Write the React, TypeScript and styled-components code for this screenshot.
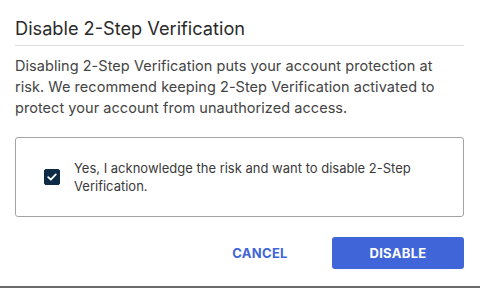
import React, { useState } from "react";
import styled, { createGlobalStyle } from "styled-components";

const Global = createGlobalStyle`
  html, body { margin: 0; padding: 0; background: #fff; }
  body { font-family: Inter, "Noto Sans", sans-serif; }
`;

const Page = styled.div`
  width: 480px;
  height: 288px;
  box-sizing: border-box;
  border-bottom: 2px solid #6b6b6b;
  display: flex;
  flex-direction: column;
  padding: 0 16px 0 15px;
`;

const Title = styled.h2`
  margin: 0;
  padding: 19px 0 8px;
  font-size: 18.2px;
  font-weight: 400;
  line-height: 18px;
  color: #2a2a2a;
  border-bottom: 1px solid #e0e0e0;
`;

const Body = styled.p`
  margin: 0;
  padding-top: 9px;
  font-size: 14.5px;
  line-height: 21px;
  color: #444;
  letter-spacing: 0.05px;
`;

const AckBox = styled.label`
  margin-top: 19px;
  height: 80px;
  box-sizing: border-box;
  border: 1px solid #a3a3a3;
  border-radius: 3px;
  display: flex;
  align-items: center;
  gap: 14px;
  padding: 0 20px 0 28px;
  cursor: pointer;
`;

const Check = styled.span<{ $checked: boolean }>`
  flex: none;
  width: 16px;
  height: 16px;
  border-radius: 2px;
  background: ${(p) => (p.$checked ? "#0d2a47" : "#fff")};
  border: 1px solid #0d2a47;
  box-sizing: border-box;
  display: flex;
  align-items: center;
  justify-content: center;
`;

const AckText = styled.span`
  font-size: 13px;
  line-height: 18px;
  color: #3a3a3a;
`;

const Actions = styled.div`
  margin-top: 20px;
  display: flex;
  justify-content: flex-end;
  align-items: center;
  gap: 24px;
`;

const Button = styled.button<{ $primary?: boolean }>`
  font-family: Inter, "Noto Sans", sans-serif;
  font-size: 13px;
  font-weight: 700;
  letter-spacing: 0.3px;
  height: 32px;
  border: none;
  border-radius: 3px;
  cursor: pointer;
  width: ${(p) => (p.$primary ? "132px" : "96px")};
  background: ${(p) => (p.$primary ? "#4065d8" : "transparent")};
  color: ${(p) => (p.$primary ? "#fff" : "#4065d8")};
`;

export default function App() {
  const [checked, setChecked] = useState(true);
  return (
    <>
      <Global />
      <Page>
        <Title>Disable 2-Step Verification</Title>
        <Body>
          Disabling 2-Step Verification puts your account protection at risk. We
          recommend keeping 2-Step Verification activated to protect your account
          from unauthorized access.
        </Body>
        <AckBox onClick={() => setChecked((c) => !c)}>
          <Check $checked={checked}>
            {checked && (
              <svg width="12" height="12" viewBox="0 0 12 12">
                <path d="M2.2 6.2 L4.8 8.7 L9.8 3.4" fill="none" stroke="#fff" strokeWidth="1.8" strokeLinecap="round" strokeLinejoin="round" />
              </svg>
            )}
          </Check>
          <AckText>Yes, I acknowledge the risk and want to disable 2-Step Verification.</AckText>
        </AckBox>
        <Actions>
          <Button>CANCEL</Button>
          <Button $primary>DISABLE</Button>
        </Actions>
      </Page>
    </>
  );
}
